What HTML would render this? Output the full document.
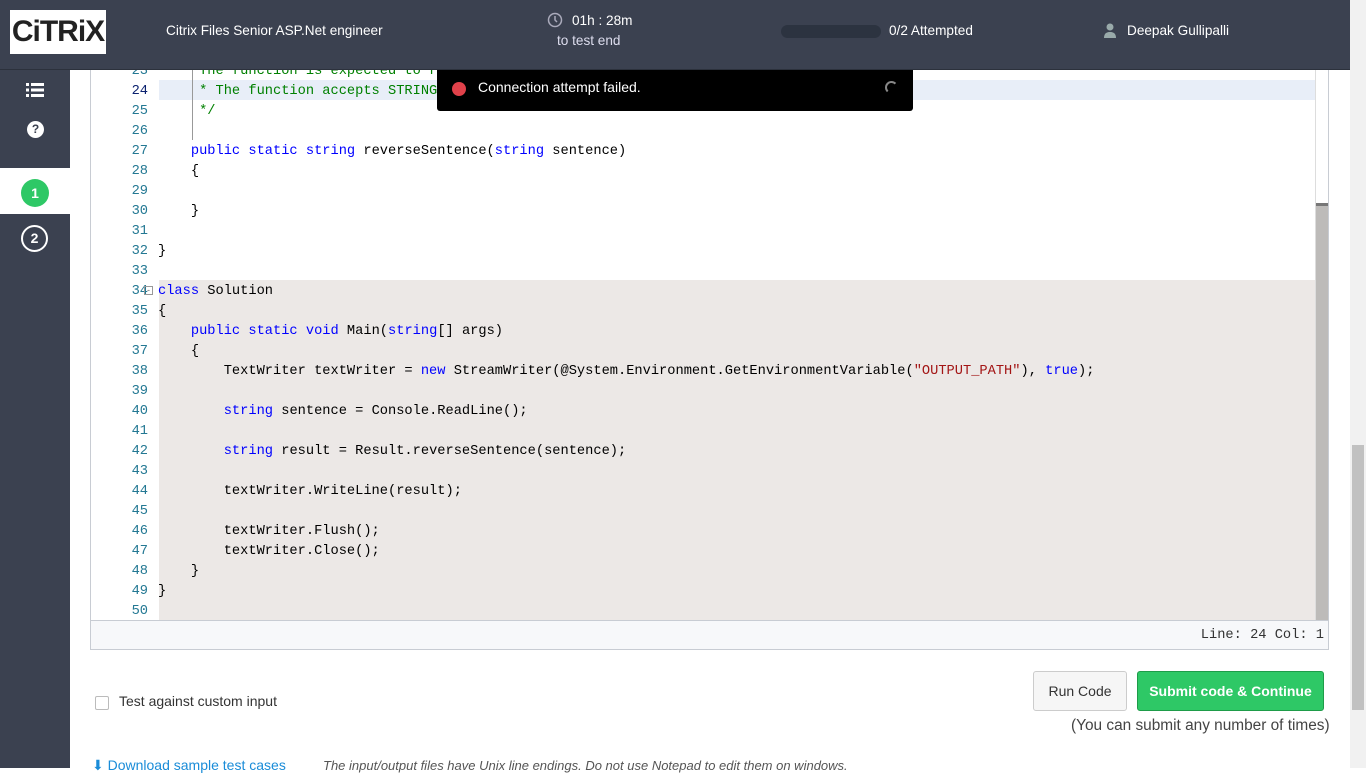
<!DOCTYPE html>
<html><head><style>
*{margin:0;padding:0;box-sizing:border-box}
body{width:1366px;height:768px;overflow:hidden;background:#fff;font-family:"Liberation Sans",sans-serif;position:relative}
.hdr{position:absolute;left:0;top:0;width:1350px;height:70px;background:#3b4150;border-bottom:1px solid #2c313c;color:#fff;font-size:13.6px}
.logo{position:absolute;left:10px;top:10px;width:96px;height:44px;background:#fff;font:bold 30px "Liberation Sans",sans-serif;color:#222;text-align:center;line-height:44px;letter-spacing:-1px}
.side{position:absolute;left:0;top:70px;width:70px;height:698px;background:#3b4150}
.pgsb{position:absolute;left:1350px;top:0;width:16px;height:768px;background:#f1f1f1}
.ed{position:absolute;left:90px;top:70px;width:1239px;height:580px;border:1px solid #c8ccd3;border-top:none;overflow:hidden;background:#fff}
.ln{position:absolute;left:0;width:1225px;height:20px;font:13.7px/20px "Liberation Mono",monospace;white-space:pre;color:#000}
.ln .n{position:absolute;left:0;width:57px;text-align:right;color:#237893}
.ln .c{position:absolute;left:67px}
.k{color:#00f}.g{color:#008000}.s{color:#a31515}
.status{position:absolute;left:0;top:550px;width:1239px;height:30px;background:#f7f8fa;border-top:1px solid #c8ccd3;font:13.7px/30px "Liberation Mono",monospace;text-align:right;padding-right:6px;color:#333}
</style></head><body>
<div class="hdr">
<div class="logo">CiTRiX</div>
<div style="position:absolute;left:166px;top:23px">Citrix Files Senior ASP.Net engineer</div>
<svg style="position:absolute;left:547px;top:12px" width="16" height="16" viewBox="0 0 16 16"><circle cx="8" cy="8" r="6.5" fill="none" stroke="#aab" stroke-width="1.5"/><path d="M8 4v4l2 2" stroke="#aab" stroke-width="1.5" fill="none"/></svg>
<div style="position:absolute;left:572px;top:13px">01h : 28m</div>
<div style="position:absolute;left:557px;top:33px;color:#dde">to test end</div>
<div style="position:absolute;left:781px;top:25px;width:100px;height:13px;border-radius:7px;background:#2c3340"></div>
<div style="position:absolute;left:889px;top:23px">0/2 Attempted</div>
<svg style="position:absolute;left:1103px;top:23px" width="14" height="15" viewBox="0 0 14 15"><circle cx="7" cy="4" r="3.5" fill="#9aa"/><path d="M1 15c0-5 3-6 6-6s6 1 6 6z" fill="#9aa"/></svg>
<div style="position:absolute;left:1127px;top:23px">Deepak Gullipalli</div>
</div>
<div class="side">
<svg style="position:absolute;left:26px;top:13px" width="18" height="14" viewBox="0 0 18 14"><g fill="#fff"><rect x="0" y="0" width="3" height="3"/><rect x="5" y="0" width="13" height="3"/><rect x="0" y="5.5" width="3" height="3"/><rect x="5" y="5.5" width="13" height="3"/><rect x="0" y="11" width="3" height="3"/><rect x="5" y="11" width="13" height="3"/></g></svg>
<div style="position:absolute;left:27px;top:51px;width:17px;height:17px;border-radius:50%;background:#fff;color:#3b4150;font:bold 12px/17px 'Liberation Sans';text-align:center">?</div>
<div style="position:absolute;left:0;top:98px;width:70px;height:46px;background:#fff"></div>
<div style="position:absolute;left:21px;top:109px;width:28px;height:28px;border-radius:50%;background:#2ec866;color:#fff;font:bold 14px/28px 'Liberation Sans';text-align:center">1</div>
<div style="position:absolute;left:21px;top:155px;width:27px;height:27px;border-radius:50%;border:2px solid #fff;color:#fff;font:bold 14px/23px 'Liberation Sans';text-align:center">2</div>
</div>
<div class="pgsb"><div style="position:absolute;left:2px;top:445px;width:12px;height:265px;background:#c1c1c1"></div></div>
<div class="ed">
<div style="position:absolute;left:68px;top:210px;width:1157px;height:340px;background:#ece8e6"></div>
<div style="position:absolute;left:68px;top:10px;width:1157px;height:20px;background:#e8eef8"></div>
<div style="position:absolute;left:101px;top:0;width:1px;height:70px;background:#999"></div>
<div style="position:absolute;left:0;top:4px;width:1239px;height:546px">
<div class="ln" style="top:-12px"><span class="n">23</span><span class="c g">     The function is expected to return a STRING.</span></div>
<div class="ln" style="top:8px"><span class="n" style="color:#0b216f">24</span><span class="c g">     * The function accepts STRING sentence as parameter.</span></div>
<div class="ln" style="top:28px"><span class="n">25</span><span class="c g">     */</span></div>
<div class="ln" style="top:48px"><span class="n">26</span></div>
<div class="ln" style="top:68px"><span class="n">27</span><span class="c">    <span class="k">public static string</span> reverseSentence(<span class="k">string</span> sentence)</span></div>
<div class="ln" style="top:88px"><span class="n">28</span><span class="c">    {</span></div>
<div class="ln" style="top:108px"><span class="n">29</span></div>
<div class="ln" style="top:128px"><span class="n">30</span><span class="c">    }</span></div>
<div class="ln" style="top:148px"><span class="n">31</span></div>
<div class="ln" style="top:168px"><span class="n">32</span><span class="c">}</span></div>
<div class="ln" style="top:188px"><span class="n">33</span></div>
<div class="ln" style="top:208px"><span class="n">34</span><span style="position:absolute;left:53px;top:4px;width:9px;height:9px;border:1px solid #999;font:9px/7px 'Liberation Sans';text-align:center;color:#666">-</span><span class="c"><span class="k">class</span> Solution</span></div>
<div class="ln" style="top:228px"><span class="n">35</span><span class="c">{</span></div>
<div class="ln" style="top:248px"><span class="n">36</span><span class="c">    <span class="k">public static void</span> Main(<span class="k">string</span>[] args)</span></div>
<div class="ln" style="top:268px"><span class="n">37</span><span class="c">    {</span></div>
<div class="ln" style="top:288px"><span class="n">38</span><span class="c">        TextWriter textWriter = <span class="k">new</span> StreamWriter(@System.Environment.GetEnvironmentVariable(<span class="s">"OUTPUT_PATH"</span>), <span class="k">true</span>);</span></div>
<div class="ln" style="top:308px"><span class="n">39</span></div>
<div class="ln" style="top:328px"><span class="n">40</span><span class="c">        <span class="k">string</span> sentence = Console.ReadLine();</span></div>
<div class="ln" style="top:348px"><span class="n">41</span></div>
<div class="ln" style="top:368px"><span class="n">42</span><span class="c">        <span class="k">string</span> result = Result.reverseSentence(sentence);</span></div>
<div class="ln" style="top:388px"><span class="n">43</span></div>
<div class="ln" style="top:408px"><span class="n">44</span><span class="c">        textWriter.WriteLine(result);</span></div>
<div class="ln" style="top:428px"><span class="n">45</span></div>
<div class="ln" style="top:448px"><span class="n">46</span><span class="c">        textWriter.Flush();</span></div>
<div class="ln" style="top:468px"><span class="n">47</span><span class="c">        textWriter.Close();</span></div>
<div class="ln" style="top:488px"><span class="n">48</span><span class="c">    }</span></div>
<div class="ln" style="top:508px"><span class="n">49</span><span class="c">}</span></div>
<div class="ln" style="top:528px"><span class="n">50</span></div>
</div>
<div style="position:absolute;left:1224px;top:0;width:15px;height:550px;background:#fff;border-left:1px solid #ddd"><div style="position:absolute;left:0;top:133px;width:14px;height:417px;background:#bdbbb9;border-top:3px solid #777"></div></div>
<div class="status">Line: 24 Col: 1</div>
</div>
<div style="position:absolute;left:437px;top:70px;width:476px;height:41px;background:#000;border-radius:0 0 3px 3px;color:#fff;font-size:14px">
<div style="position:absolute;left:15px;top:12px;width:14px;height:14px;border-radius:50%;background:#e0414a"></div>
<div style="position:absolute;left:41px;top:9px">Connection attempt failed.</div>
<div style="position:absolute;left:448px;top:11px;width:13px;height:13px;border-radius:50%;border:2px solid transparent;border-left-color:#888;border-top-color:#888"></div>
</div>
<div style="position:absolute;left:95px;top:696px;width:14px;height:14px;border:1px solid #bbb;border-radius:2px"></div>
<div style="position:absolute;left:119px;top:693px;font-size:14px;color:#333">Test against custom input</div>
<div style="position:absolute;left:1033px;top:671px;width:94px;height:40px;border:1px solid #ccc;border-radius:3px;background:#f6f6f6;font:14px/38px 'Liberation Sans';text-align:center;color:#333">Run Code</div>
<div style="position:absolute;left:1137px;top:671px;width:187px;height:40px;border:1px solid #1e9c49;border-radius:3px;background:#2ec866;font:bold 14px/38px 'Liberation Sans';text-align:center;color:#fff">Submit code &amp; Continue</div>
<div style="position:absolute;left:1071px;top:717px;font-size:15.4px;color:#444">(You can submit any number of times)</div>
<div style="position:absolute;left:92px;top:757px;font-size:14px;color:#1a8cd8">&#11015; Download sample test cases</div>
<div style="position:absolute;left:323px;top:758px;font-size:13px;color:#555;font-style:italic">The input/output files have Unix line endings. Do not use Notepad to edit them on windows.</div>
</body></html>
